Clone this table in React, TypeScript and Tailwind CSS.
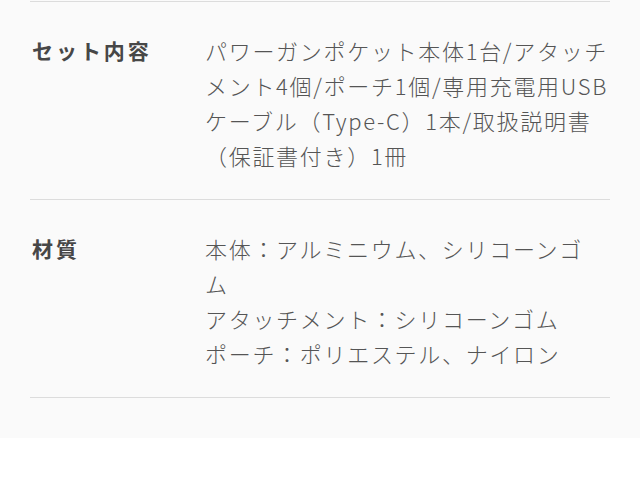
const specs = [
  {
    label: "セット内容",
    lines: [
      "パワーガンポケット本体1台/アタッチ",
      "メント4個/ポーチ1個/専用充電用USB",
      "ケーブル（Type-C）1本/取扱説明書",
      "（保証書付き）1冊",
    ],
  },
  {
    label: "材質",
    lines: [
      "本体：アルミニウム、シリコーンゴ",
      "ム",
      "アタッチメント：シリコーンゴム",
      "ポーチ：ポリエステル、ナイロン",
    ],
  },
];

export default function App() {
  return (
    <div className="min-h-screen bg-white" style={{ fontFamily: '"Noto Sans CJK JP", "Noto Sans", sans-serif' }}>
      <section className="bg-[#fafafa] px-[30px] pt-px pb-[40px]">
        <dl className="border-t border-[#dcdcdc]">
          {specs.map((spec) => (
            <div key={spec.label} className="flex border-b border-[#dcdcdc] pt-[31px] pb-[26px]">
              <dt className="w-[175px] shrink-0 pl-[2px] text-[21px] leading-[35px] font-bold tracking-[0.14em] text-[#474747]">
                {spec.label}
              </dt>
              <dd className="flex-1 text-[22px] leading-[35px] font-light tracking-[1.7px] text-[#555]">
                {spec.lines.map((line, i) => (
                  <span key={i} className="block whitespace-nowrap">
                    {line}
                  </span>
                ))}
              </dd>
            </div>
          ))}
        </dl>
      </section>
    </div>
  );
}
